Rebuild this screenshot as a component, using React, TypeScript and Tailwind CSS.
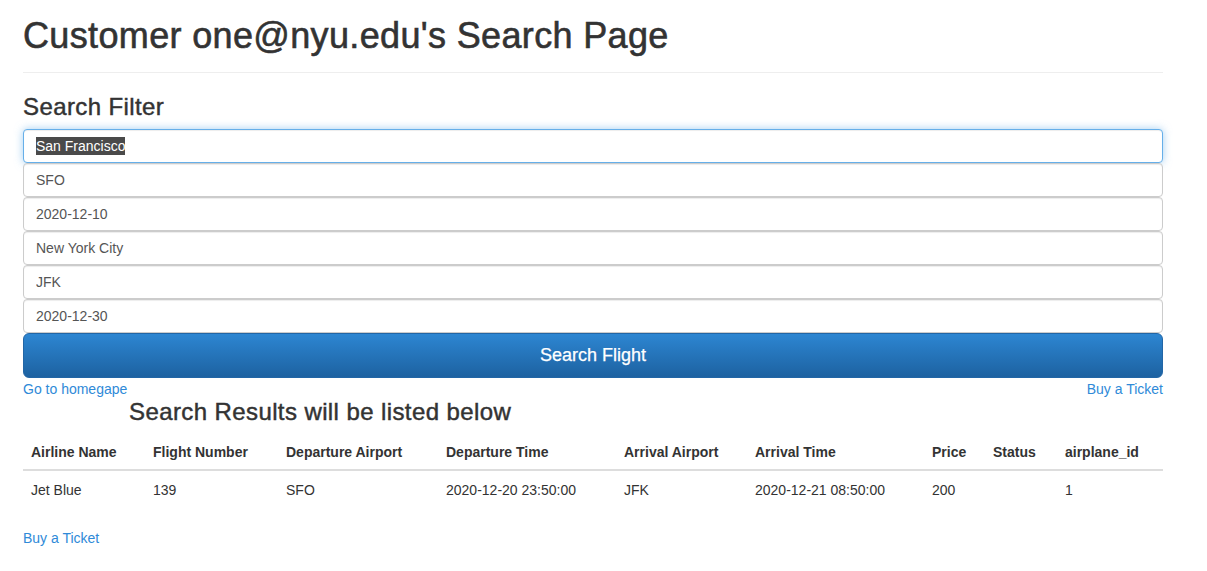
import React from "react";

const cols = [
  { label: "Airline Name", w: "w-[122px]" },
  { label: "Flight Number", w: "w-[133px]" },
  { label: "Departure Airport", w: "w-[160px]" },
  { label: "Departure Time", w: "w-[178px]" },
  { label: "Arrival Airport", w: "w-[131px]" },
  { label: "Arrival Time", w: "w-[177px]" },
  { label: "Price", w: "w-[61px]" },
  { label: "Status", w: "w-[72px]" },
  { label: "airplane_id", w: "w-[106px]" },
];

const row = ["Jet Blue", "139", "SFO", "2020-12-20 23:50:00", "JFK", "2020-12-21 08:50:00", "200", "", "1"];

const fields = ["SFO", "2020-12-10", "New York City", "JFK", "2020-12-30"];

export default function App() {
  return (
    <div className="min-h-screen bg-white font-['Liberation_Sans',Arial,sans-serif] text-[#333]">
      <div className="mx-[23px] w-[1140px]">
        {/* page header */}
        <div className="mt-[16px] border-b border-[#eee] pb-[16px]">
          <h1 className="text-[36px] leading-[1.1] tracking-[0.35px] [-webkit-text-stroke:0.6px_#333]">
            Customer one@nyu.edu's Search Page
          </h1>
        </div>

        <h3 className="mt-[21px] mb-[9px] text-[24px] leading-[1.1] tracking-[0.4px] [-webkit-text-stroke:0.45px_#333]">
          Search Filter
        </h3>

        <form className="flex flex-col" onSubmit={(e) => e.preventDefault()}>
          {/* focused field with its text selected */}
          <div className="flex h-[34px] items-center rounded-[4px] border border-[#66afe9] bg-white px-[12px] text-[14px] text-[#555] shadow-[inset_0_1px_1px_rgba(0,0,0,0.075),0_0_8px_rgba(102,175,233,0.6)]">
            <span className="bg-[#4a4a4a] leading-[18px] text-white">San Francisco</span>
          </div>
          {fields.map((v) => (
            <input
              key={v}
              readOnly
              value={v}
              className="h-[34px] rounded-[4px] border border-[#ccc] bg-white px-[12px] text-[14px] text-[#555] shadow-[inset_0_1px_1px_rgba(0,0,0,0.075)] outline-none"
            />
          ))}
          <button
            type="submit"
            className="h-[45px] rounded-[6px] border border-[#2266a6] bg-gradient-to-b from-[#2d86d2] to-[#1d62a1] text-[18px] text-white [-webkit-text-stroke:0.25px_#fff]"
          >
            Search Flight
          </button>
        </form>

        <div className="mt-[1px] flex justify-between text-[14px] leading-[20px] text-[#2f8ad8]">
          <a href="#">Go to homegape</a>
          <a href="#">Buy a Ticket</a>
        </div>

        <h3 className="ml-[106px] text-[24px] leading-[1.1] tracking-[0.4px] [-webkit-text-stroke:0.45px_#333]">
          Search Results will be listed below
        </h3>

        <table className="mt-[9px] w-full table-fixed border-collapse text-[14px]">
          <thead>
            <tr>
              {cols.map((c) => (
                <th
                  key={c.label}
                  className={`${c.w} border-b-2 border-[#ddd] px-[8px] pt-[8px] pb-[7px] text-left font-bold leading-[20px]`}
                >
                  {c.label}
                </th>
              ))}
            </tr>
          </thead>
          <tbody>
            <tr>
              {row.map((v, i) => (
                <td key={i} className="px-[8px] pt-[9px] pb-[8px] leading-[20px]">
                  {v}
                </td>
              ))}
            </tr>
          </tbody>
        </table>

        <a href="#" className="mt-[20px] block w-fit text-[14px] leading-[20px] text-[#2f8ad8]">
          Buy a Ticket
        </a>
      </div>
    </div>
  );
}
